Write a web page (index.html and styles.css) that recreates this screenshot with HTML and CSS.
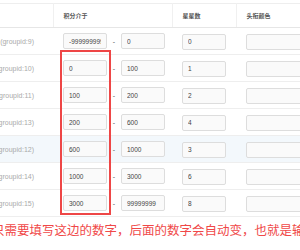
FILE: index.html
```html
<!DOCTYPE html>
<html lang="zh-CN">
<head>
    <meta charset="UTF-8">
    <title>用户组积分设置</title>
    <link rel="stylesheet" href="styles.css">
</head>
<body>
    <div class="page">
        <table class="grid">
            <colgroup>
                <col class="col-name">
                <col class="col-range">
                <col class="col-stars">
                <col class="col-color">
            </colgroup>
            <thead>
                <tr>
                    <th></th>
                    <th>积分介于</th>
                    <th>星星数</th>
                    <th>头衔颜色</th>
                </tr>
            </thead>
            <tbody>
                <tr>
                    <td><div class="group">会员(groupid:9)</div></td>
                    <td><div class="range"><input class="num" value="-999999999"><span class="dash">-</span><input class="num" value="0"></div></td>
                    <td><input class="num" value="0"></td>
                    <td><input class="hue"></td>
                </tr>
                <tr>
                    <td><div class="group">会员(groupid:10)</div></td>
                    <td><div class="range"><input class="num" value="0"><span class="dash">-</span><input class="num" value="100"></div></td>
                    <td><input class="num" value="1"></td>
                    <td><input class="hue"></td>
                </tr>
                <tr>
                    <td><div class="group">会员(groupid:11)</div></td>
                    <td><div class="range"><input class="num" value="100"><span class="dash">-</span><input class="num" value="200"></div></td>
                    <td><input class="num" value="2"></td>
                    <td><input class="hue"></td>
                </tr>
                <tr>
                    <td><div class="group">会员(groupid:13)</div></td>
                    <td><div class="range"><input class="num" value="200"><span class="dash">-</span><input class="num" value="600"></div></td>
                    <td><input class="num" value="4"></td>
                    <td><input class="hue"></td>
                </tr>
                <tr class="hover">
                    <td><div class="group">会员(groupid:12)</div></td>
                    <td><div class="range"><input class="num" value="600"><span class="dash">-</span><input class="num" value="1000"></div></td>
                    <td><input class="num" value="3"></td>
                    <td><input class="hue"></td>
                </tr>
                <tr>
                    <td><div class="group">会员(groupid:14)</div></td>
                    <td><div class="range"><input class="num" value="1000"><span class="dash">-</span><input class="num" value="3000"></div></td>
                    <td><input class="num" value="6"></td>
                    <td><input class="hue"></td>
                </tr>
                <tr>
                    <td><div class="group">会员(groupid:15)</div></td>
                    <td><div class="range"><input class="num" value="3000"><span class="dash">-</span><input class="num" value="99999999"></div></td>
                    <td><input class="num" value="8"></td>
                    <td><input class="hue"></td>
                </tr>
            </tbody>
        </table>
        <p class="note">只需要填写这边的数字，后面的数字会自动变，也就是输入</p>
        <div class="mark"></div>
    </div>
</body>
</html>
```

FILE: styles.css
```css
body {
    margin: 0;
    font-family: "Liberation Sans", "Noto Sans CJK SC", sans-serif;
    background: #fff;
    overflow: hidden;
}
.page {
    position: relative;
    width: 300px;
    height: 250px;
    overflow: hidden;
}
.grid {
    border-collapse: collapse;
    table-layout: fixed;
    width: 340px;
    margin-top: 3px;
}
.col-name { width: 53px; }
.col-range { width: 119px; }
.col-stars { width: 64px; }
.col-color { width: 104px; }
.grid th {
    height: 23px;
    padding: 0 0 0 10px;
    font-size: 6px;
    font-weight: bold;
    color: #555;
    text-align: left;
    border-top: 1px solid #eee;
    border-bottom: 1px solid #e6e6e6;
    border-right: 1px solid #f0f0f0;
}
.grid td {
    height: 26px;
    padding: 0 0 0 10px;
    border-bottom: 1px solid #eee;
}
.grid td:first-child {
    padding: 0;
}
.hover td { background: #f3f8fc; }
.group {
    display: flex;
    justify-content: flex-end;
    padding-right: 19px;
    white-space: nowrap;
    font-size: 7px;
    color: #aaa;
}
.range {
    display: flex;
    align-items: center;
}
.dash {
    width: 14px;
    text-align: center;
    font-size: 7px;
    color: #555;
}
input {
    box-sizing: border-box;
    height: 16px;
    padding: 0 5px;
    border: 1px solid #ddd;
    border-radius: 2px;
    background: #fafafa;
    font-family: "Liberation Sans", sans-serif;
    font-size: 6.5px;
    color: #444;
    outline: none;
    vertical-align: middle;
}
.num { width: 44px; }
.hue { width: 70px; }
.note {
    margin: 3px 0 0 -8px;
    white-space: nowrap;
    font-family: "Noto Sans CJK SC", sans-serif;
    font-size: 12.5px;
    color: #f04848;
}
.mark {
    position: absolute;
    left: 60px;
    top: 50px;
    width: 47px;
    height: 161px;
    border: 2px solid #ee4646;
}
```
